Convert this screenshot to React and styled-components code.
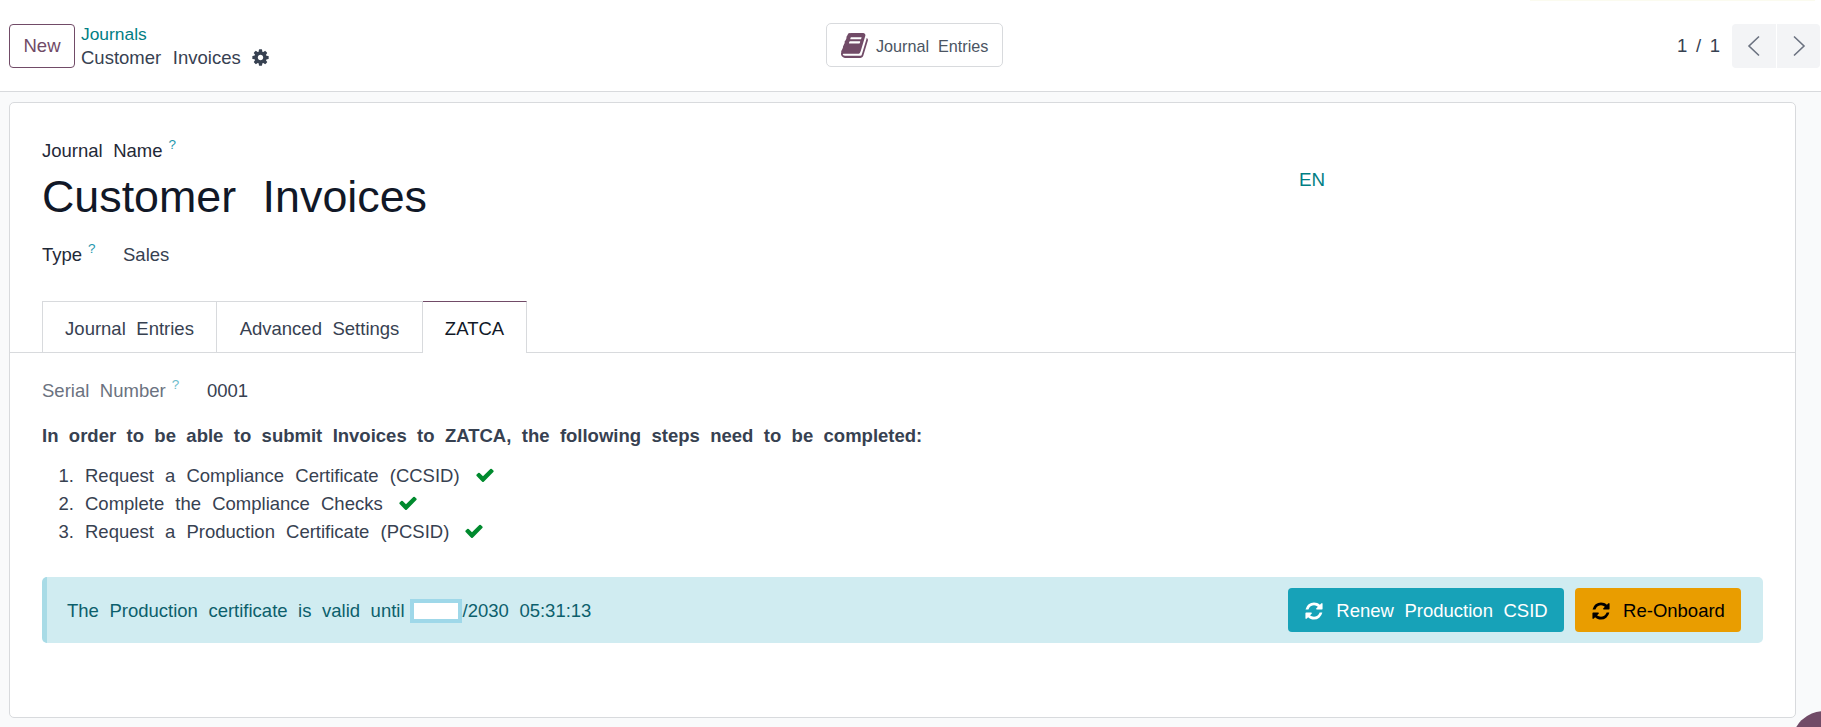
import React from "react";
import styled, { createGlobalStyle } from "styled-components";

const Global = createGlobalStyle`
  html, body { margin: 0; padding: 0; height: 100%; }
  body {
    background: #f9fafb;
    font-family: "Liberation Sans", Arial, sans-serif;
    font-size: 18.5px;
    color: #374151;
    word-spacing: 5.4px;
    overflow: hidden;
  }
`;

const Page = styled.div`
  position: relative;
  width: 1821px;
  height: 727px;
  overflow: hidden;
  display: flex;
  flex-direction: column;
`;

const TopGlow = styled.div`
  position: absolute;
  top: 0;
  left: 1530px;
  width: 285px;
  height: 1px;
  background: #fbfbef;
`;

const ControlPanel = styled.header`
  height: 92px;
  box-sizing: border-box;
  background: #fff;
  border-bottom: 1px solid #d8dadd;
  display: grid;
  grid-template-columns: 1fr auto 1fr;
  align-items: center;
  padding: 0 1px 0 9px;
`;

const PanelLeft = styled.div`
  display: flex;
  align-items: center;
  gap: 6px;
`;

const NewButton = styled.button`
  width: 66px;
  height: 44px;
  padding: 0;
  background: #fff;
  border: 1px solid #714b67;
  border-radius: 4px;
  color: #714b67;
  font: inherit;
  word-spacing: inherit;
`;

const Crumbs = styled.div`
  display: flex;
  flex-direction: column;
  line-height: 23px;
  padding-top: 1px;
`;

const CrumbLink = styled.a`
  color: #017e84;
  font-size: 17.4px;
`;

const CrumbCurrent = styled.div`
  display: flex;
  align-items: center;
  gap: 10px;
  word-spacing: 6.5px;
`;

const StatButton = styled.button`
  width: 177px;
  height: 44px;
  box-sizing: border-box;
  margin-bottom: 2px;
  padding: 2px 0 0 14px;
  display: flex;
  align-items: center;
  gap: 6px;
  background: #fff;
  border: 1px solid #d8dadd;
  border-radius: 5px;
  color: #4b5563;
  font: inherit;
  font-size: 16.2px;
  word-spacing: 4.4px;
`;

const StatLabel = styled.span`
  padding-top: 2px;
`;

const PanelRight = styled.div`
  justify-self: end;
  display: flex;
  align-items: center;
  gap: 12px;
`;

const PagerText = styled.span`
  color: #374151;
  word-spacing: 3.5px;
`;

const PagerGroup = styled.div`
  display: flex;
  gap: 1px;
`;

const PagerButton = styled.button`
  width: ${(p) => p.$w}px;
  height: 44px;
  padding: 0;
  display: flex;
  align-items: center;
  justify-content: center;
  background: #f3f4f6;
  border: 0;
  border-radius: ${(p) => (p.$left ? "4px 0 0 4px" : "0 4px 4px 0")};
  color: #6b7280;
`;

const Sheet = styled.main`
  margin: 10px 25px 0 9px;
  height: 616px;
  box-sizing: border-box;
  background: #fff;
  border: 1px solid #d8dadd;
  border-radius: 5px;
  padding-top: 37px;
`;

const TitleRow = styled.div`
  display: flex;
  padding-left: 32px;
`;

const TitleBlock = styled.div`
  width: 1257px;
`;

const Label = styled.label`
  color: ${(p) => (p.$muted ? "#6b7280" : "#1f2937")};
  display: block;
  line-height: 21px;
`;

const Help = styled.sup`
  color: ${(p) => (p.$light ? "#6dbccb" : "#1f97ad")};
  font-size: 13.5px;
  margin-left: 6px;
  line-height: 0;
  position: relative;
  top: -1px;
`;

const Title = styled.h1`
  margin: 9px 0 0;
  font-size: 44.8px;
  line-height: 52px;
  font-weight: 400;
  color: #111827;
  word-spacing: 14px;
`;

const LangLink = styled.a`
  color: #017e84;
  line-height: 21px;
  padding-top: 29px;
  font-size: 18.8px;
`;

const FieldRow = styled.div`
  display: flex;
  align-items: baseline;
  line-height: 21px;
  padding-left: ${(p) => p.$inset}px;
  margin-top: ${(p) => p.$top}px;
`;

const FieldLabel = styled.div`
  width: ${(p) => p.$w}px;
`;

const Tabs = styled.nav`
  margin-top: 36px;
  height: 52px;
  box-sizing: border-box;
  padding-left: 32px;
  display: flex;
  border-bottom: 1px solid #d8dadd;
`;

const Tab = styled.div`
  width: ${(p) => p.$w}px;
  height: 52px;
  box-sizing: border-box;
  display: flex;
  align-items: center;
  justify-content: center;
  padding-top: 3px;
  background: #fff;
  color: ${(p) => (p.$active ? "#111827" : "#374151")};
  border: 1px solid #d8dadd;
  border-left-width: ${(p) => (p.$first ? 1 : 0)}px;
  border-bottom-width: ${(p) => (p.$active ? 0 : 1)}px;
  border-top-color: ${(p) => (p.$active ? "#714b67" : "#d8dadd")};
`;

const Body = styled.section`
  padding: 0 32px;
`;

const Intro = styled.p`
  margin: 23px 0 0;
  font-weight: 700;
  color: #374151;
  line-height: 23px;
  word-spacing: 5.25px;
`;

const Steps = styled.ol`
  margin: 15px 0 0;
  padding: 0 0 0 43px;
  word-spacing: 6px;
`;

const Step = styled.li`
  line-height: 28px;
`;

const Tick = styled.span`
  display: inline-flex;
  vertical-align: -3px;
  margin-left: 15px;
  color: #008a2e;
`;

const Alert = styled.div`
  margin-top: 31px;
  height: 66px;
  box-sizing: border-box;
  display: flex;
  align-items: center;
  justify-content: space-between;
  padding: 0 22px 0 20px;
  background: #d0ecf1;
  border-left: 5px solid #a8dbe6;
  border-radius: 5px;
  color: #0c5f6c;
`;

const AlertText = styled.div`
  display: flex;
  align-items: center;
  padding-top: 2px;
`;

const Redacted = styled.span`
  display: inline-block;
  width: 44px;
  height: 16px;
  margin: 0 1px 0 5px;
  background: #fff;
  border: 4px solid #9fd8e9;
`;

const Actions = styled.div`
  display: flex;
  gap: 11px;
`;

const ActionButton = styled.button`
  width: ${(p) => p.$w}px;
  height: 44px;
  padding: 2px 0 0;
  display: flex;
  align-items: center;
  justify-content: center;
  gap: 12px;
  border: 0;
  border-radius: 4px;
  background: ${(p) => p.$bg};
  color: ${(p) => p.$fg};
  font: inherit;
  word-spacing: inherit;
`;

const Fab = styled.div`
  position: absolute;
  left: 1792px;
  top: 711px;
  width: 64px;
  height: 64px;
  border-radius: 50%;
  background: #714b67;
`;

const Fa = ({ d, size, color = "currentColor" }) => (
  <svg width={size} height={size} viewBox="0 0 1792 1792" fill={color}>
    <path d={d} />
  </svg>
);

const BOOK =
  "M1639 478q40 57 18 129l-275 906q-19 64-76.5 107.5t-122.5 43.5h-923q-77 0-148.5-53.5t-99.5-131.5q-24-67-2-127 0-4 3-27t4-37q1-8-3-21.5t-3-19.5q2-11 8-21t16.5-23.5 16.5-23.5q23-38 45-91.5t30-91.5q3-10 .5-30t-.5-28q3-11 17-28t17-23q21-36 42-92t25-90q1-9-2.5-32t.5-28q4-13 22-30.5t22-22.5q19-26 42.5-84.5t27.5-96.5q1-8-3-25.5t-2-26.5q2-8 9-18t18-23 17-21q8-12 16.5-30.5t15-35 16-36 19.5-32 26.5-23.5 36-11.5 47.5 5.5l-1 3q38-9 51-9h761q74 0 114 56t18 130l-274 906q-36 119-71.5 153.5t-128.5 34.5h-869q-27 0-38 15-11 16-1 43 24 70 144 70h923q29 0 56-15.5t35-41.5l300-987q7-22 5-57 38 15 59 43zm-1064 2q-4 13 2 22.5t20 9.5h608q13 0 25.5-9.5t16.5-22.5l21-64q4-13-2-22.5t-20-9.5h-608q-13 0-25.5 9.5t-16.5 22.5zm-83 256q-4 13 2 22.5t20 9.5h608q13 0 25.5-9.5t16.5-22.5l21-64q4-13-2-22.5t-20-9.5h-608q-13 0-25.5 9.5t-16.5 22.5z";
const REFRESH =
  "M1639 1056q0 5-1 7-64 268-268 434.5t-478 166.5q-146 0-282.5-55t-243.5-157l-129 129q-19 19-45 19t-45-19-19-45v-448q0-26 19-45t45-19h448q26 0 45 19t19 45-19 45l-137 137q71 66 161 102t187 36q134 0 250-65t186-179q11-17 53-117 8-23 30-23h192q13 0 22.5 9.5t9.5 22.5zm25-800v448q0 26-19 45t-45 19h-448q-26 0-45-19t-19-45 19-45l138-138q-148-137-349-137-134 0-250 65t-186 179q-11 17-53 117-8 23-30 23h-199q-13 0-22.5-9.5t-9.5-22.5v-7q65-268 270-434.5t480-166.5q146 0 284 55.5t245 156.5l130-129q19-19 45-19t45 19 19 45z";
const CHECK =
  "M1671 566q0 40-28 68l-724 724-136 136q-28 28-68 28t-68-28l-136-136-362-362q-28-28-28-68t28-68l136-136q28-28 68-28t68 28l294 295 656-657q28-28 68-28t68 28l136 136q28 28 28 68z";
const COG =
  "M1152 896q0-106-75-181t-181-75-181 75-75 181 75 181 181 75 181-75 75-181zm512-109v222q0 12-8 23t-20 13l-185 28q-19 54-39 91 35 50 107 138 10 12 10 25t-9 23q-27 37-99 108t-94 71q-12 0-26-9l-138-108q-44 23-91 38-16 136-29 186-7 28-36 28h-222q-14 0-24.5-8.5t-11.5-21.5l-28-184q-49-16-90-37l-141 107q-10 9-25 9-14 0-25-11-126-114-165-168-7-10-7-23 0-12 8-23 15-21 51-66.5t54-70.5q-27-50-41-99l-183-27q-13-2-21-12.5t-8-23.5v-222q0-12 8-23t19-13l186-28q14-46 39-92-40-57-107-138-10-12-10-24 0-10 9-23 26-36 98.5-107.5t94.5-71.5q13 0 26 10l138 107q44-23 91-38 16-136 29-186 7-28 36-28h222q14 0 24.5 8.5t11.5 21.5l28 184q49 16 90 37l142-107q9-9 24-9 13 0 25 10 129 119 165 170 7 8 7 22 0 12-8 23-15 21-51 66.5t-54 70.5q26 50 41 98l183 28q13 2 21 12.5t8 23.5z";

const Chevron = ({ flip }) => (
  <svg width="14" height="22" viewBox="0 0 14 22" fill="none" stroke="currentColor" strokeWidth="1.6">
    <path d={flip ? "M2 1.5 12 11 2 20.5" : "M12 1.5 2 11l10 9.5"} />
  </svg>
);

const steps = [
  "Request a Compliance Certificate (CCSID)",
  "Complete the Compliance Checks",
  "Request a Production Certificate (PCSID)",
];

export default function App() {
  return (
    <Page>
      <Global />
      <TopGlow />
      <ControlPanel>
        <PanelLeft>
          <NewButton>New</NewButton>
          <Crumbs>
            <CrumbLink>Journals</CrumbLink>
            <CrumbCurrent>
              Customer Invoices
              <Fa d={COG} size={19} />
            </CrumbCurrent>
          </Crumbs>
        </PanelLeft>
        <StatButton>
          <Fa d={BOOK} size={29} color="#714b67" />
          <StatLabel>Journal Entries</StatLabel>
        </StatButton>
        <PanelRight>
          <PagerText>1 / 1</PagerText>
          <PagerGroup>
            <PagerButton $left $w={44}>
              <Chevron />
            </PagerButton>
            <PagerButton $w={43}>
              <Chevron flip />
            </PagerButton>
          </PagerGroup>
        </PanelRight>
      </ControlPanel>
      <Sheet>
        <TitleRow>
          <TitleBlock>
            <Label>
              Journal Name<Help>?</Help>
            </Label>
            <Title>Customer Invoices</Title>
          </TitleBlock>
          <LangLink>EN</LangLink>
        </TitleRow>
        <FieldRow $top={22} $inset={32}>
          <FieldLabel $w={81}>
            <Label>
              Type<Help>?</Help>
            </Label>
          </FieldLabel>
          <span>Sales</span>
        </FieldRow>
        <Tabs>
          <Tab $first $w={175}>Journal Entries</Tab>
          <Tab $w={206}>Advanced Settings</Tab>
          <Tab $active $w={104}>ZATCA</Tab>
        </Tabs>
        <Body>
          <FieldRow $top={27} $inset={0}>
            <FieldLabel $w={165}>
              <Label $muted>
                Serial Number<Help $light>?</Help>
              </Label>
            </FieldLabel>
            <span>0001</span>
          </FieldRow>
          <Intro>In order to be able to submit Invoices to ZATCA, the following steps need to be completed:</Intro>
          <Steps>
            {steps.map((s) => (
              <Step key={s}>
                {s}
                <Tick>
                  <Fa d={CHECK} size={20} />
                </Tick>
              </Step>
            ))}
          </Steps>
          <Alert>
            <AlertText>
              The Production certificate is valid until
              <Redacted />
              /2030 05:31:13
            </AlertText>
            <Actions>
              <ActionButton $w={276} $bg="#17a2b8" $fg="#fff">
                <Fa d={REFRESH} size={20} />
                Renew Production CSID
              </ActionButton>
              <ActionButton $w={166} $bg="#e99d00" $fg="#000">
                <Fa d={REFRESH} size={20} />
                Re-Onboard
              </ActionButton>
            </Actions>
          </Alert>
        </Body>
      </Sheet>
      <Fab />
    </Page>
  );
}
